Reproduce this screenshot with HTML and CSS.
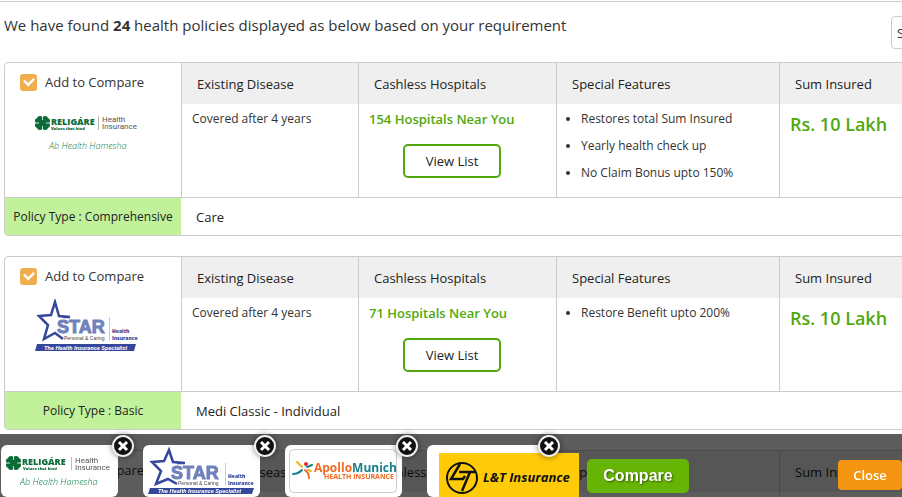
FILE: index.html
```
<!DOCTYPE html>
<html lang="en">
<head>
    <meta charset="UTF-8">
    <meta name="viewport" content="width=device-width, initial-scale=1.0">
    <title>Health Policies</title>
    <link rel="stylesheet" href="styles.css">
</head>
<body>
    <main class="results">
        <div class="results-head">
            <h1>We have found <b>24</b> health policies displayed as below based on your requirement</h1>
            <select class="sort" aria-label="Sort by">
                <option>Sort By</option>
            </select>
        </div>

        <table class="policy">
            <colgroup>
                <col class="col-brand"><col class="col-disease"><col class="col-hospitals"><col class="col-features"><col>
            </colgroup>
            <tr>
                <td class="brand" rowspan="2">
                    <label class="compare"><input type="checkbox" checked> Add to Compare</label>
                    <svg class="logo" width="104" height="42" viewBox="0 0 104 42" role="img" aria-label="Religare Health Insurance">
                        <g fill="#0a6b37">
                            <circle cx="5" cy="4" r="3"/><circle cx="10" cy="4" r="3"/>
                            <circle cx="3" cy="6" r="3"/><circle cx="12" cy="6" r="3"/>
                            <circle cx="3" cy="10" r="3"/><circle cx="12" cy="10" r="3"/>
                            <circle cx="5" cy="12" r="3"/><circle cx="10" cy="12" r="3"/>
                            <rect x="4" y="5" width="7" height="6"/>
                        </g>
                        <path d="M7.500 0v5M7.500 11v5M0 8h4M11 8h4" stroke="#fff" stroke-width=".8"/>
                        <text class="rel-name" x="16" y="10" font-size="9">RELIGÁRE</text>
                        <text class="rel-tag" x="16" y="15" font-size="4">Values that bind</text>
                        <path d="M63.500 1v14" stroke="#bbb"/>
                        <text class="rel-side" x="67" y="7" font-size="8">Health</text>
                        <text class="rel-side" x="67" y="14" font-size="8">Insurance</text>
                        <text class="rel-script" x="14" y="34" font-size="9">Ab Health Hamesha</text>
                    </svg>
                </td>
                <th>Existing Disease</th>
                <th>Cashless Hospitals</th>
                <th>Special Features</th>
                <th>Sum Insured</th>
            </tr>
            <tr class="details">
                <td>Covered after 4 years</td>
                <td>
                    <p class="near">154 Hospitals Near You</p>
                    <button class="view-list">View List</button>
                </td>
                <td>
                    <ul>
                        <li>Restores total Sum Insured</li>
                        <li>Yearly health check up</li>
                        <li>No Claim Bonus upto 150%</li>
                    </ul>
                </td>
                <td class="sum">Rs. 10 Lakh</td>
            </tr>
            <tr class="plan">
                <td class="type">Policy Type : Comprehensive</td>
                <td colspan="4">Care</td>
            </tr>
        </table>

        <table class="policy">
            <colgroup>
                <col class="col-brand"><col class="col-disease"><col class="col-hospitals"><col class="col-features"><col>
            </colgroup>
            <tr>
                <td class="brand" rowspan="2">
                    <label class="compare"><input type="checkbox" checked> Add to Compare</label>
                    <svg class="logo logo-star" width="104" height="54" viewBox="0 0 104 54" role="img" aria-label="Star Health Insurance">
                        <path d="M28 18H35L24 17L20 3L16 16L4 17L13 26L9 40L20 34L28 40" fill="none" stroke="#34479a" stroke-width="2.500"/>
                        <text class="star-name" x="22" y="34" font-size="18">STAR</text>
                        <text class="star-tag" x="29" y="41" font-size="5">Personal &amp; Caring</text>
                        <path d="M74.500 18v24" stroke="#ccc"/>
                        <text class="star-side" x="77" y="34" font-size="5">Health</text>
                        <text class="star-side" x="77" y="41" font-size="5">Insurance</text>
                        <path d="M2 45H101L99 52H0Z" fill="#34479a"/>
                        <text class="star-strip" x="9" y="51" font-size="6">The Health Insurance Specialist</text>
                    </svg>
                </td>
                <th>Existing Disease</th>
                <th>Cashless Hospitals</th>
                <th>Special Features</th>
                <th>Sum Insured</th>
            </tr>
            <tr class="details">
                <td>Covered after 4 years</td>
                <td>
                    <p class="near">71 Hospitals Near You</p>
                    <button class="view-list">View List</button>
                </td>
                <td>
                    <ul>
                        <li>Restore Benefit upto 200%</li>
                    </ul>
                </td>
                <td class="sum">Rs. 10 Lakh</td>
            </tr>
            <tr class="plan">
                <td class="type">Policy Type : Basic</td>
                <td colspan="4">Medi Classic - Individual</td>
            </tr>
        </table>

        <table class="policy">
            <colgroup>
                <col class="col-brand"><col class="col-disease"><col class="col-hospitals"><col class="col-features"><col>
            </colgroup>
            <tr>
                <td class="brand" rowspan="2">
                    <label class="compare"><input type="checkbox" checked> Add to Compare</label>
                </td>
                <th>Existing Disease</th>
                <th>Cashless Hospitals</th>
                <th>Special Features</th>
                <th>Sum Insured</th>
            </tr>
            <tr class="details">
                <td></td>
                <td></td>
                <td></td>
                <td></td>
            </tr>
        </table>
    </main>

    <!-- selected policies, stays at the bottom of the window -->
    <div class="compare-bar">
        <div class="tile">
            <svg width="117" height="52" viewBox="0 0 117 52" role="img" aria-label="Religare Health Insurance">
                <g fill="#0a6b37">
                    <circle cx="10" cy="14" r="3"/><circle cx="15" cy="14" r="3"/>
                    <circle cx="8" cy="16" r="3"/><circle cx="17" cy="16" r="3"/>
                    <circle cx="8" cy="20" r="3"/><circle cx="17" cy="20" r="3"/>
                    <circle cx="10" cy="22" r="3"/><circle cx="15" cy="22" r="3"/>
                    <rect x="9" y="15" width="7" height="6"/>
                </g>
                <path d="M12.500 10v5M12.500 21v5M5 18h4M16 18h4" stroke="#fff" stroke-width=".8"/>
                <text class="rel-name" x="21" y="20" font-size="9">RELIGÁRE</text>
                <text class="rel-tag" x="22" y="25" font-size="4">Values that bind</text>
                <path d="M70.500 12v13" stroke="#bbb"/>
                <text class="rel-side" x="74" y="18" font-size="8">Health</text>
                <text class="rel-side" x="74" y="25" font-size="8">Insurance</text>
                <text class="rel-script" x="19" y="40" font-size="9">Ab Health Hamesha</text>
            </svg>
            <button class="remove" aria-label="Remove Religare"><svg width="12" height="12" viewBox="0 0 12 12"><path d="M2 2l8 8M10 2l-8 8"/></svg></button>
        </div>
        <div class="tile">
            <svg width="117" height="52" viewBox="0 0 117 52" role="img" aria-label="Star Health Insurance">
                <path d="M34 18H42L30 17L26 5L21 16L9 17L18 26L13 39L25 34L34 39" fill="none" stroke="#34479a" stroke-width="2.500"/>
                <text class="star-name" x="28" y="34" font-size="18">STAR</text>
                <text class="star-tag" x="35" y="40" font-size="5">Personal &amp; Caring</text>
                <path d="M82.500 18v22" stroke="#ccc"/>
                <text class="star-side" x="85" y="33" font-size="5">Health</text>
                <text class="star-side" x="85" y="40" font-size="5">Insurance</text>
                <path d="M7 43H111L109 49H5Z" fill="#34479a"/>
                <text class="star-strip" x="15" y="48" font-size="6">The Health Insurance Specialist</text>
            </svg>
            <button class="remove" aria-label="Remove Star"><svg width="12" height="12" viewBox="0 0 12 12"><path d="M2 2l8 8M10 2l-8 8"/></svg></button>
        </div>
        <div class="tile">
            <svg width="117" height="52" viewBox="0 0 117 52" role="img" aria-label="Apollo Munich Health Insurance">
                <rect x="4.500" y="4.500" width="107" height="43" rx="4" fill="#fff" stroke="#ccc"/>
                <circle cx="21" cy="19" r="2" fill="#e02a27"/>
                <g fill="none" stroke-width="2" stroke-linecap="round">
                    <path d="M12 17l5 5" stroke="#f6b41a"/>
                    <path d="M8 29q5 0 9-4" stroke="#17818d"/>
                    <path d="M20 25q4 3 4 8" stroke="#f26a21"/>
                    <path d="M22 22l5-2" stroke="#17818d"/>
                    <path d="M23 25l3 1" stroke="#f6b41a"/>
                </g>
                <text class="apollo" x="29" y="27" font-size="12">Apollo<tspan fill="#17818d">Munich</tspan></text>
                <text class="apollo-tag" x="39" y="34" font-size="7">HEALTH INSURANCE</text>
            </svg>
            <button class="remove" aria-label="Remove Apollo Munich"><svg width="12" height="12" viewBox="0 0 12 12"><path d="M2 2l8 8M10 2l-8 8"/></svg></button>
        </div>
        <div class="tile tile-wide">
            <svg width="152" height="52" viewBox="0 0 152 52" role="img" aria-label="L&amp;T Insurance">
                <rect x="12" y="8" width="140" height="44" fill="#ffcb08"/>
                <circle cx="35" cy="33" r="15" fill="none" stroke="#111" stroke-width="2"/>
                <path d="M33 19L24 34H36L38 31M32 27H49M43 27L35 46" fill="none" stroke="#111" stroke-width="2.500"/>
                <text class="lnt" x="56" y="37" font-size="13">L&amp;T Insurance</text>
            </svg>
            <button class="remove" aria-label="Remove L&amp;T"><svg width="12" height="12" viewBox="0 0 12 12"><path d="M2 2l8 8M10 2l-8 8"/></svg></button>
        </div>
        <button class="btn-compare">Compare</button>
        <button class="btn-close">Close</button>
    </div>
</body>
</html>
```
FILE: styles.css
```
* {
    box-sizing: border-box;
}
body {
    font-family: "Open Sans", "Noto Sans", sans-serif;
    font-size: 12px;
    line-height: 20px;
    color: #333;
    margin: 0;
    height: 100vh;
    overflow: hidden;
    background: #fff;
}
button, select {
    font-family: inherit;
    cursor: pointer;
}
/* the list runs past the right edge of the window */
.results {
    width: calc(100% + 60px);
    margin-top: 1px;
    padding-left: 4px;
    border-top: 1px solid #ccc;
}
.results-head {
    display: flex;
    justify-content: space-between;
    height: 60px;
    padding: 14px 0 0;
}
h1 {
    margin: 0;
    font-size: 15px;
    font-weight: 400;
    line-height: 18px;
}
.sort {
    width: 71px;
    height: 33px;
    padding: 0 5px;
    color: #333;
    font-size: 13px;
    background: #fff;
    border: 1px solid #ccc;
    border-radius: 4px;
    appearance: none;
}

/* Policy cards */
.policy {
    width: 100%;
    table-layout: fixed;
    border-collapse: separate;
    border-spacing: 0;
    margin-bottom: 20px;
    border: 1px solid #ccc;
    border-radius: 4px;
    overflow: hidden;
}
.col-brand {
    width: 176px;
}
.col-disease {
    width: 177px;
}
.col-hospitals {
    width: 198px;
}
.col-features {
    width: 223px;
}
.policy td, .policy th {
    padding: 0;
    vertical-align: top;
}
.policy th {
    height: 41px;
    padding: 11px 15px 0;
    font-size: 13px;
    font-weight: 500;
    color: #222;
    text-align: left;
    background: #efefef;
    border-left: 1px solid #ccc;
}
.policy .brand {
    padding: 9px 15px 0;
}
.compare {
    display: flex;
    align-items: center;
    gap: 8px;
    font-size: 13px;
}
.compare input {
    appearance: none;
    width: 17px;
    height: 17px;
    margin: 0;
    display: grid;
    place-items: center;
    background: #f0ad4e;
    border-radius: 3px;
}
.compare input:checked::before {
    content: "";
    width: 9px;
    height: 6px;
    margin-top: -3px;
    border: solid #fff;
    border-width: 0 0 3px 3px;
    transform: rotate(-45deg) scale(0.8);
}
.logo {
    display: block;
    margin: 23px 0 0 15px;
}
.logo-star {
    margin-top: 13px;
}
.details td {
    height: 93px;
    border-left: 1px solid #ccc;
}
.policy .details td {
    padding: 5px 10px 0;
}
.near {
    margin: 0 0 15px;
    font-size: 13px;
    font-weight: 600;
    color: #51a80d;
}
.view-list {
    display: block;
    width: 98px;
    height: 34px;
    margin: 0 0 0 34px;
    padding: 0;
    color: #222;
    font-size: 13px;
    font-weight: 500;
    background: #fff;
    border: 2px solid #51a80d;
    border-radius: 5px;
}
.details ul {
    margin: 0;
    padding-left: 14px;
}
.details li {
    margin-bottom: 7px;
}
.policy .details .sum {
    padding-top: 10px;
    font-size: 18px;
    font-weight: 600;
    color: #51a80d;
}
.policy .plan td {
    height: 38px;
    padding: 9px 15px 0;
    font-size: 13px;
    font-weight: 500;
    color: #222;
    border-top: 1px solid #ccc;
}
.policy .plan .type {
    padding: 9px 0 0;
    font-size: 12px;
    text-align: center;
    background: #c1f19b;
}

/* Bottom bar */
.compare-bar {
    position: fixed;
    left: 0;
    right: 0;
    bottom: 0;
    display: flex;
    align-items: flex-start;
    gap: 25px;
    height: 63px;
    padding: 11px 0 0 1px;
    background: rgba(0, 0, 0, 0.64);
}
.tile {
    position: relative;
    flex: none;
    width: 117px;
    height: 52px;
    background: #fff;
    border-radius: 6px;
}
.tile-wide {
    margin-right: 18px;
}
.remove {
    position: absolute;
    top: -10px;
    right: -16px;
    display: grid;
    place-items: center;
    width: 22px;
    height: 22px;
    padding: 0;
    background: #111;
    border: 2px solid #eee;
    border-radius: 50%;
    box-shadow: 0 0 6px rgba(0, 0, 0, 0.5);
}
.remove path {
    fill: none;
    stroke: #fff;
    stroke-width: 3;
}
.btn-compare {
    width: 102px;
    height: 34px;
    margin-top: 14px;
    padding: 0;
    color: #fff;
    font: bold 16px "Liberation Sans", Arial, sans-serif;
    text-shadow: 1px 1px 2px rgba(0, 0, 0, 0.5);
    background: #66b505;
    border: 0;
    border-radius: 5px;
}
.btn-close {
    width: 64px;
    height: 30px;
    margin: 15px 0 0 auto;
    padding: 0;
    color: #fff;
    font-size: 13px;
    font-weight: 600;
    background: #f39510;
    border: 0;
    border-radius: 4px;
}

/* Logo lettering */
.rel-name, .rel-tag {
    font-family: "Open Sans", sans-serif;
    font-weight: 800;
    fill: #0a6b37;
}
.rel-side {
    font-family: Roboto, sans-serif;
    fill: #555;
}
.rel-script {
    font-family: "Open Sans", cursive;
    font-style: italic;
    font-weight: 300;
    fill: #0a8048;
}
.star-name {
    font-family: "Liberation Sans", Arial, sans-serif;
    font-weight: 700;
    fill: #7181bb;
    stroke: #7181bb;
}
.star-tag {
    font-family: "Liberation Sans", Arial, sans-serif;
    fill: #444;
}
.star-side {
    font-family: "Open Sans", sans-serif;
    font-weight: 800;
    fill: #34479a;
}
.star-strip {
    font-family: Roboto, sans-serif;
    font-style: italic;
    font-weight: 700;
    fill: #fff;
}
.apollo, .apollo-tag {
    font-family: "Open Sans", sans-serif;
    font-weight: 700;
    fill: #f26a21;
}
.lnt {
    font-family: "Open Sans", sans-serif;
    font-style: italic;
    font-weight: 700;
    fill: #111;
}
```
